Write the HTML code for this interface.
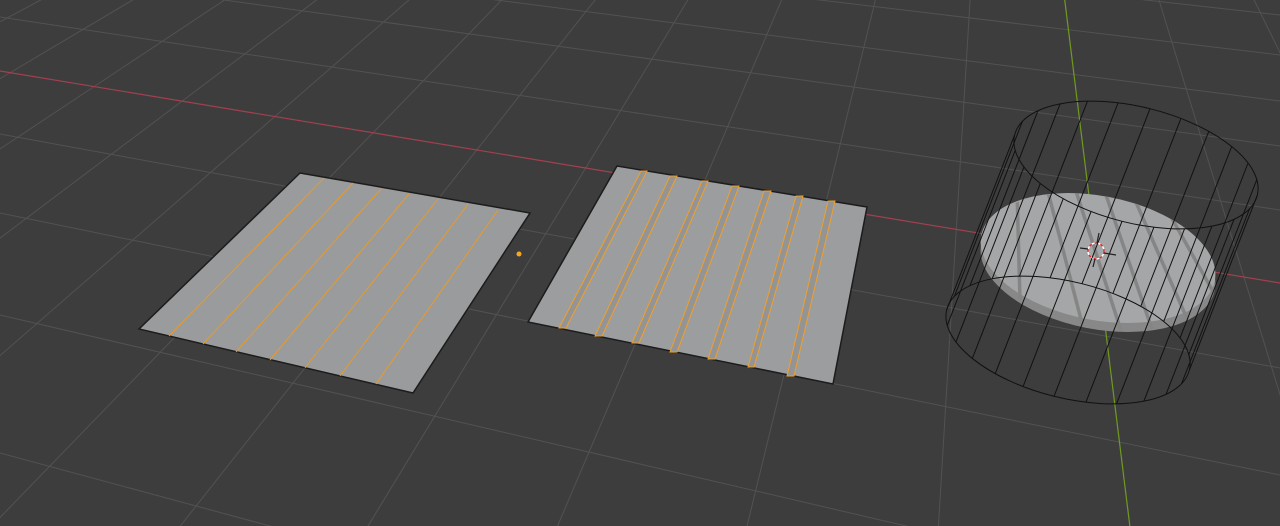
<!DOCTYPE html>
<html><head><meta charset="utf-8"><style>
html,body{margin:0;padding:0;background:#3d3d3d;overflow:hidden;width:1280px;height:526px}
svg{display:block}
</style></head><body>
<svg width="1280" height="526" viewBox="0 0 1280 526" xmlns="http://www.w3.org/2000/svg">
<rect width="1280" height="526" fill="#3d3d3d"/>
<g stroke="#525252" stroke-width="1" fill="none">
<line x1="0" y1="-128" x2="1280" y2="15"/>
<line x1="0" y1="-98" x2="1280" y2="55"/>
<line x1="0" y1="-64" x2="1280" y2="101"/>
<line x1="0" y1="-31" x2="1280" y2="146"/>
<line x1="0" y1="17" x2="1280" y2="210"/>
<line x1="0" y1="134" x2="1280" y2="368"/>
<line x1="0" y1="213" x2="1280" y2="475"/>
<line x1="0" y1="315" x2="1280" y2="613"/>
<line x1="0" y1="453" x2="1280" y2="799"/>
<line x1="0" y1="650" x2="1280" y2="1065"/>
<line x1="1001" y1="-515" x2="-1078" y2="600"/>
<line x1="1001" y1="-515" x2="-879" y2="600"/>
<line x1="1001" y1="-515" x2="-680" y2="600"/>
<line x1="1001" y1="-515" x2="-481" y2="600"/>
<line x1="1001" y1="-515" x2="-281" y2="600"/>
<line x1="1001" y1="-515" x2="-80" y2="600"/>
<line x1="1001" y1="-515" x2="122" y2="600"/>
<line x1="1001" y1="-515" x2="323" y2="600"/>
<line x1="1001" y1="-515" x2="526" y2="600"/>
<line x1="1001" y1="-515" x2="729" y2="600"/>
<line x1="1001" y1="-515" x2="934" y2="600"/>
<line x1="1001" y1="-515" x2="1343" y2="600"/>
<line x1="1001" y1="-515" x2="1549" y2="600"/>
<line x1="1001" y1="-515" x2="1758" y2="600"/>
<line x1="1001" y1="-515" x2="1965" y2="600"/>
</g>
<line x1="0" y1="71" x2="1280" y2="283" stroke="#a3404f" stroke-width="1.2"/>
<line x1="1001" y1="-515" x2="1139" y2="600" stroke="#6f9a22" stroke-width="1.2"/>

<polygon points="300,173 530,213 413,393 139,329" fill="#9a9b9c" stroke="#1c1c1c" stroke-width="1.5"/>
<g stroke="#e89a2a" stroke-width="1">
<line x1="324" y1="178" x2="169" y2="336"/>
<line x1="353" y1="183" x2="203" y2="344"/>
<line x1="381" y1="189" x2="236" y2="352"/>
<line x1="409" y1="194" x2="270" y2="360"/>
<line x1="438" y1="199" x2="305" y2="368"/>
<line x1="468" y1="204" x2="340" y2="376"/>
<line x1="498" y1="210" x2="376" y2="384"/>
</g>
<circle cx="519" cy="254" r="2.5" fill="#f5a623"/>

<polygon points="617,166 867,207 833,384 528,322" fill="#9c9d9e" stroke="#1c1c1c" stroke-width="1.5"/>
<g stroke="#f0a02a" stroke-width="1" fill="#959494">
<polygon points="641,171 647,171 566,328 559,328"/>
<polygon points="670,176 677,176 602,336 595,336"/>
<polygon points="702,181 708,181 639,343 632,343"/>
<polygon points="732,186 739,186 677,352 670,352"/>
<polygon points="764,191 771,191 715,359 708,359"/>
<polygon points="796,196 803,196 754,367 748,367"/>
<polygon points="828,201 835,201 794,376 787,376"/>
</g>

<defs>
<clipPath id="dk"><ellipse cx="1098" cy="262" rx="120" ry="66" transform="rotate(11 1098 262)"/></clipPath>
</defs>
<ellipse cx="1098" cy="267" rx="119" ry="62" transform="rotate(11 1098 267)" fill="#888"/>
<ellipse cx="1098" cy="258" rx="119" ry="62" transform="rotate(11 1098 258)" fill="#a5a6a7"/>
<g clip-path="url(#dk)" stroke="#858585" stroke-width="3.5">
<line x1="1017" y1="190" x2="1020" y2="300"/>
<line x1="1047" y1="188" x2="1085" y2="335"/>
<line x1="1075" y1="188" x2="1124" y2="340"/>
<line x1="1105" y1="192" x2="1155" y2="338"/>
<line x1="1135" y1="200" x2="1192" y2="330"/>
<line x1="1170" y1="215" x2="1215" y2="295"/>
</g>
<g>
<circle cx="1096" cy="251" r="8" fill="none" stroke="#fff" stroke-width="1.5"/>
<circle cx="1096" cy="251" r="8" fill="none" stroke="#e0262b" stroke-width="1.5" stroke-dasharray="3 3"/>
<g stroke="#222" stroke-width="1.2">
<line x1="1080" y1="248" x2="1088" y2="249"/>
<line x1="1104" y1="253" x2="1116" y2="255"/>
<line x1="1099" y1="233" x2="1097" y2="243"/>
<line x1="1095" y1="259" x2="1093" y2="267"/>
</g>
</g>

<g transform="matrix(121.3 30.2 -14 56.3 1136 165)" stroke="#111" stroke-width="1" fill="none">
<ellipse cx="0" cy="0" rx="1" ry="1" vector-effect="non-scaling-stroke"/>
<ellipse cx="-0.19" cy="3.21" rx="1" ry="1" vector-effect="non-scaling-stroke"/>
<line vector-effect="non-scaling-stroke" x1="1" y1="0" x2="0.81" y2="3.21"/>
<line vector-effect="non-scaling-stroke" x1="0.966" y1="0.259" x2="0.776" y2="3.469"/>
<line vector-effect="non-scaling-stroke" x1="0.866" y1="0.5" x2="0.676" y2="3.71"/>
<line vector-effect="non-scaling-stroke" x1="0.707" y1="0.707" x2="0.517" y2="3.917"/>
<line vector-effect="non-scaling-stroke" x1="0.5" y1="0.866" x2="0.31" y2="4.076"/>
<line vector-effect="non-scaling-stroke" x1="0.259" y1="0.966" x2="0.069" y2="4.176"/>
<line vector-effect="non-scaling-stroke" x1="0" y1="1" x2="-0.19" y2="4.21"/>
<line vector-effect="non-scaling-stroke" x1="-0.259" y1="0.966" x2="-0.449" y2="4.176"/>
<line vector-effect="non-scaling-stroke" x1="-0.5" y1="0.866" x2="-0.69" y2="4.076"/>
<line vector-effect="non-scaling-stroke" x1="-0.707" y1="0.707" x2="-0.897" y2="3.917"/>
<line vector-effect="non-scaling-stroke" x1="-0.866" y1="0.5" x2="-1.056" y2="3.71"/>
<line vector-effect="non-scaling-stroke" x1="-0.966" y1="0.259" x2="-1.156" y2="3.469"/>
<line vector-effect="non-scaling-stroke" x1="-1" y1="0" x2="-1.19" y2="3.21"/>
<line vector-effect="non-scaling-stroke" x1="-0.966" y1="-0.259" x2="-1.156" y2="2.951"/>
<line vector-effect="non-scaling-stroke" x1="-0.866" y1="-0.5" x2="-1.056" y2="2.71"/>
<line vector-effect="non-scaling-stroke" x1="-0.707" y1="-0.707" x2="-0.897" y2="2.503"/>
<line vector-effect="non-scaling-stroke" x1="-0.5" y1="-0.866" x2="-0.69" y2="2.344"/>
<line vector-effect="non-scaling-stroke" x1="-0.259" y1="-0.966" x2="-0.449" y2="2.244"/>
<line vector-effect="non-scaling-stroke" x1="0" y1="-1" x2="-0.19" y2="2.21"/>
<line vector-effect="non-scaling-stroke" x1="0.259" y1="-0.966" x2="0.069" y2="2.244"/>
<line vector-effect="non-scaling-stroke" x1="0.5" y1="-0.866" x2="0.31" y2="2.344"/>
<line vector-effect="non-scaling-stroke" x1="0.707" y1="-0.707" x2="0.517" y2="2.503"/>
<line vector-effect="non-scaling-stroke" x1="0.866" y1="-0.5" x2="0.676" y2="2.71"/>
<line vector-effect="non-scaling-stroke" x1="0.966" y1="-0.259" x2="0.776" y2="2.951"/>
</g>
</svg>
</body></html>
